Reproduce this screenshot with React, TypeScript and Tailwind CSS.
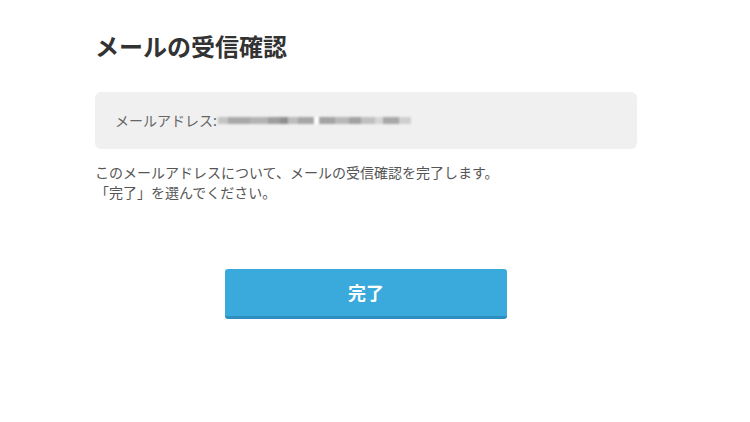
const jp = { fontFamily: '"Noto Sans CJK JP", "Noto Sans", sans-serif' };

// blurred (masked) address pieces: [width, shade]
const blurBlocks: [number, string][] = [
  [10, 'bg-[#c4c4c4]'],
  [22, 'bg-[#a9a9a9]'],
  [18, 'bg-[#b3b3b3]'],
  [12, 'bg-[#9e9e9e]'],
  [8, 'bg-[#8f8f8f]'],
  [10, 'bg-[#bdbdbd]'],
  [16, 'bg-[#a6a6a6]'],
  [5, 'bg-[#ffffff]'],
  [16, 'bg-[#a3a3a3]'],
  [14, 'bg-[#b8b8b8]'],
  [12, 'bg-[#a1a1a1]'],
  [14, 'bg-[#c0c0c0]'],
  [8, 'bg-[#d6d6d6]'],
  [16, 'bg-[#a8a8a8]'],
  [12, 'bg-[#cfcfcf]'],
];

export default function App() {
  return (
    <div className="min-h-screen w-full bg-white text-[#555]" style={jp}>
      <div className="ml-[95px] w-[542px] pt-[30px]">
        <h1 className="text-[24px] leading-[32px] font-bold text-[#333]">
          メールの受信確認
        </h1>

        <div className="mt-[30px] h-[57px] rounded-md bg-[#f0f0f0] flex items-center px-[20px] text-[14px]">
          <span className="text-[#666]">メールアドレス:</span>
          <span className="flex items-center h-[12px] ml-[1px] blur-[1px]">
            {blurBlocks.map(([w, c], i) => (
              <span key={i} className={`h-[7px] ${c}`} style={{ width: w }} />
            ))}
          </span>
        </div>

        <p className="mt-[13px] text-[14px] leading-[20px] text-[#555]">
          このメールアドレスについて、メールの受信確認を完了します。
          <br />
          「完了」を選んでください。
        </p>

        <div className="mt-[67px] flex justify-center">
          <button className="w-[282px] h-[50px] rounded-[3px] bg-[#3aa9db] border-b-[3px] border-[#2e8ec0] text-white text-[18px] font-bold">
            完了
          </button>
        </div>
      </div>
    </div>
  );
}
